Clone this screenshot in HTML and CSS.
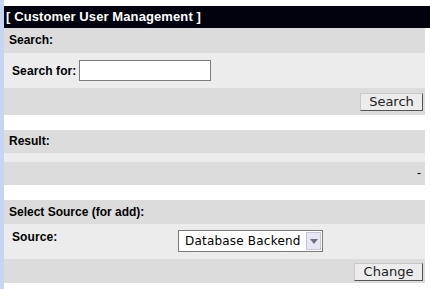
FILE: index.html
```html
<!DOCTYPE html>
<html lang="en">
<head>
  <meta charset="UTF-8" />
  <title>Customer User Management</title>
  <link rel="stylesheet" href="styles.css">
</head>
<body>
  <div class="page">
    <div class="strip"></div>
    <div class="main">
      <div class="title">[ Customer User Management ]</div>

      <div class="box">
        <div class="head">Search:</div>
        <div class="row row-middle">
          <span class="label">Search for:</span>
          <span class="textbox"></span>
        </div>
        <div class="actions">
          <span class="btn">Search</span>
        </div>
      </div>

      <div class="box">
        <div class="head head-short">Result:</div>
        <div class="spacer"></div>
        <div class="result">-</div>
      </div>

      <div class="box">
        <div class="head head-source">Select Source (for add):</div>
        <div class="row row-top">
          <span class="label label-wide">Source:</span>
          <span class="select">
            <span class="select-text">Database Backend</span>
            <span class="select-arrow">
              <svg width="8" height="5" viewBox="0 0 8 5"><polygon points="0,0 8,0 4,5" fill="#6e6e80"/></svg>
            </span>
          </span>
        </div>
        <div class="actions actions-last">
          <span class="btn btn-change">Change</span>
        </div>
      </div>
    </div>
  </div>
</body>
</html>
```

FILE: styles.css
```css
* {
  margin: 0;
  padding: 0;
  box-sizing: border-box;
}
body {
  background: #fff;
  font-family: 'Liberation Sans', Arial, sans-serif;
  font-size: 12px;
  color: #000;
  width: 430px;
  height: 289px;
  overflow: hidden;
}
.page {
  display: flex;
  height: 289px;
}
.strip {
  width: 4px;
  background: #c6d6f0;
}
.main {
  flex: 1;
  padding-top: 6px;
}
.title {
  height: 22px;
  background: #02020e;
  color: #fff;
  font-weight: bold;
  font-size: 13px;
  letter-spacing: 0.1px;
  line-height: 22px;
  padding-left: 2px;
}
.box {
  margin-right: 5px;
  margin-bottom: 15px;
}
.head {
  height: 25px;
  line-height: 25px;
  background: #dcdcdc;
  font-weight: bold;
  padding-left: 5px;
}
.head-short {
  height: 23px;
  line-height: 23px;
}
.head-source {
  height: 24px;
  line-height: 24px;
}
.row {
  height: 35px;
  background: #ececec;
  display: flex;
  padding-left: 8px;
}
.row-middle {
  align-items: center;
}
.row-top {
  align-items: flex-start;
  padding-top: 6px;
}
.label {
  font-weight: bold;
  letter-spacing: 0.1px;
  margin-right: 3px;
}
.label-wide {
  width: 166px;
  margin-right: 0;
  line-height: 13px;
  padding-top: 1px;
}
.textbox {
  width: 132px;
  height: 21px;
  background: #fff;
  border: 1px solid #7b7b7b;
}
.actions {
  height: 27px;
  background: #dcdcdc;
  display: flex;
  justify-content: flex-end;
  align-items: flex-start;
  padding: 5px 2px 0 0;
}
.actions-last {
  height: 24px;
  padding-top: 4px;
}
.btn {
  height: 18px;
  width: 63px;
  background: #ececec;
  border: 1px solid #555;
  border-top-color: #c8c8c8;
  border-left-color: #c8c8c8;
  font-family: 'DejaVu Sans', Verdana, sans-serif;
  font-size: 13px;
  line-height: 16px;
  text-align: center;
  color: #222;
}
.btn-change {
  width: 69px;
}
.spacer {
  height: 9px;
  background: #ececec;
}
.result {
  height: 23px;
  line-height: 23px;
  background: #dcdcdc;
  text-align: right;
  padding-right: 4px;
}
.select {
  width: 145px;
  height: 22px;
  background: #fff;
  border: 1px solid #7b7b7b;
  display: flex;
  align-items: center;
  padding: 0 1px 0 6px;
  font-family: 'DejaVu Sans', Verdana, sans-serif;
  font-size: 12px;
  letter-spacing: 0.2px;
}
.select-text {
  flex: 1;
}
.select-arrow {
  width: 15px;
  height: 18px;
  background: #e6e6f4;
  border: 1px solid #c4c4d4;
  display: flex;
  align-items: center;
  justify-content: center;
}
```
